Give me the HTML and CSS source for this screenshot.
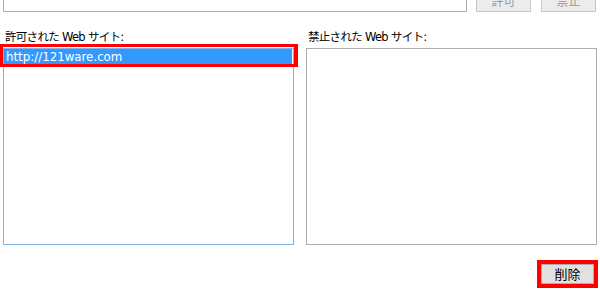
FILE: index.html
```html
<!DOCTYPE html>
<html lang="ja">
<head>
<meta charset="utf-8">
<link rel="stylesheet" href="styles.css">
</head>
<body>
<div class="top-row">
  <div class="url-input"></div>
  <button class="btn btn-disabled">許可</button>
  <button class="btn btn-disabled">禁止</button>
</div>
<div class="panes">
  <div class="pane">
    <div class="pane-label">許可された Web サイト:</div>
    <div class="list list-focused">
      <div class="list-item selected">http://121ware.com</div>
    </div>
    <div class="highlight-box"></div>
  </div>
  <div class="pane">
    <div class="pane-label">禁止された Web サイト:</div>
    <div class="list"></div>
  </div>
</div>
<div class="bottom-row">
  <button class="btn btn-delete">削除</button>
</div>
</body>
</html>
```
FILE: styles.css
```css
html, body {
  margin: 0;
  padding: 0;
  background: #ffffff;
  width: 600px;
  height: 300px;
  overflow: hidden;
}
body {
  font-family: "DejaVu Sans", "Noto Sans CJK JP", sans-serif;
  font-size: 11.5px;
  color: #000;
}
.top-row {
  display: flex;
  align-items: flex-end;
  margin-top: -12px;
  height: 24px;
  padding-left: 3px;
}
.url-input {
  box-sizing: border-box;
  width: 464px;
  height: 25px;
  border: 1px solid #abadb3;
  background: #fff;
}
.btn {
  box-sizing: border-box;
  font-family: "Noto Sans CJK JP", "Liberation Sans", sans-serif;
  font-size: 12px;
  background: #e1e1e1;
  border: 1px solid #adadad;
  padding: 0;
  margin: 0;
  line-height: 18px;
}
.btn-disabled {
  width: 55px;
  height: 22px;
  margin-left: 9px;
  color: #9a9a9a;
  background: #ececec;
  border-color: #c8c8c8;
  line-height: 14px;
}
.btn-disabled + .btn-disabled {
  margin-left: 10px;
}
.panes {
  display: flex;
  gap: 12px;
  margin-top: 16px;
  padding-left: 3px;
}
.pane {
  position: relative;
  width: 291px;
}
.pane-label {
  height: 18px;
  line-height: 18px;
  padding-left: 2px;
  white-space: nowrap;
  letter-spacing: -0.7px;
}
.list {
  box-sizing: border-box;
  margin-top: 2px;
  height: 197px;
  border: 1px solid #abadb3;
  background: #fff;
  padding: 0;
}
.list-focused {
  border-color: #7eb4ea;
}
.list-item {
  height: 16px;
  line-height: 16px;
  padding-left: 2px;
  font-size: 11.8px;
  white-space: nowrap;
}
.list-item.selected {
  background: #3399ff;
  color: #fff;
  border-right: 1px solid #fff;
}
.highlight-box {
  position: absolute;
  left: -3px;
  top: 16px;
  width: 298px;
  height: 23px;
  box-sizing: border-box;
  border: 3px solid #ff0000;
  border-right-width: 4px;
}
.bottom-row {
  display: flex;
  justify-content: flex-end;
  margin-top: 19px;
  padding-right: 6px;
}
.btn-delete {
  width: 53px;
  height: 20px;
  font-size: 13px;
  color: #000;
  outline: 4px solid #ff0000;
  outline-offset: 0;
}
```
